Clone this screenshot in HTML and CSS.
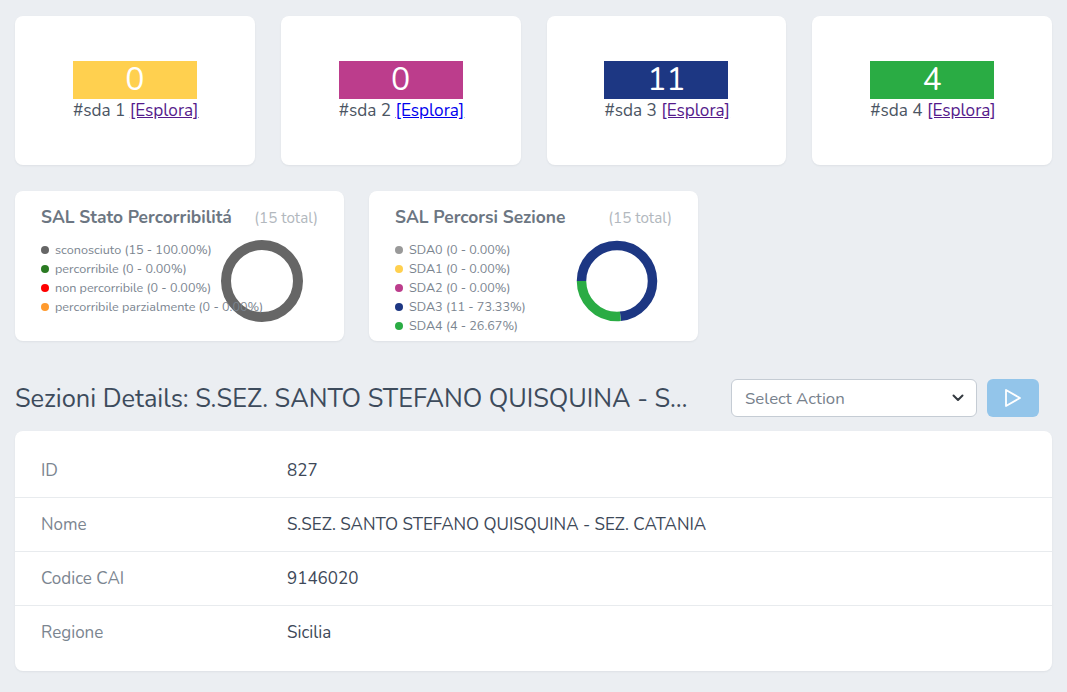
FILE: index.html
```html
<!DOCTYPE html>
<html lang="it">
<head>
<meta charset="utf-8">
<title>Sezioni Details</title>
<link rel="stylesheet" href="styles.css">
</head>
<body>
<main class="page">
  <section class="stats">
    <div class="card stat">
      <div class="stat-box">
        <div class="stat-num yellow">0</div>
        <div class="stat-label">#sda 1 <a class="visited" href="#">[Esplora]</a></div>
      </div>
    </div>
    <div class="card stat">
      <div class="stat-box">
        <div class="stat-num magenta">0</div>
        <div class="stat-label">#sda 2 <a class="link" href="#">[Esplora]</a></div>
      </div>
    </div>
    <div class="card stat">
      <div class="stat-box">
        <div class="stat-num blue">11</div>
        <div class="stat-label">#sda 3 <a class="visited" href="#">[Esplora]</a></div>
      </div>
    </div>
    <div class="card stat">
      <div class="stat-box">
        <div class="stat-num green">4</div>
        <div class="stat-label">#sda 4 <a class="visited" href="#">[Esplora]</a></div>
      </div>
    </div>
  </section>

  <section class="charts">
    <div class="card chart">
      <div class="chart-head">
        <h3 class="chart-title">SAL Stato Percorribilitá</h3>
        <span class="chart-total">(15 total)</span>
      </div>
      <div class="chart-body">
        <ul class="legend">
          <li><span class="dot" style="background:#666666"></span>sconosciuto (15 - 100.00%)</li>
          <li><span class="dot" style="background:#2a7a22"></span>percorribile (0 - 0.00%)</li>
          <li><span class="dot" style="background:#ff0000"></span>non percorribile (0 - 0.00%)</li>
          <li><span class="dot" style="background:#ff9a2e"></span>percorribile parzialmente (0 - 0.00%)</li>
        </ul>
        <svg class="donut donut-a" width="84" height="84" viewBox="0 0 84 84">
          <circle cx="42" cy="42" r="36" fill="none" stroke="#666666" stroke-width="10"/>
        </svg>
      </div>
    </div>
    <div class="card chart">
      <div class="chart-head">
        <h3 class="chart-title">SAL Percorsi Sezione</h3>
        <span class="chart-total">(15 total)</span>
      </div>
      <div class="chart-body">
        <ul class="legend">
          <li><span class="dot" style="background:#999999"></span>SDA0 (0 - 0.00%)</li>
          <li><span class="dot" style="background:#ffd04f"></span>SDA1 (0 - 0.00%)</li>
          <li><span class="dot" style="background:#bc3d8c"></span>SDA2 (0 - 0.00%)</li>
          <li><span class="dot" style="background:#1d3783"></span>SDA3 (11 - 73.33%)</li>
          <li><span class="dot" style="background:#2aac44"></span>SDA4 (4 - 26.67%)</li>
        </ul>
        <svg class="donut donut-b" width="84" height="84" viewBox="0 0 84 84">
          <g transform="rotate(180 42 42)">
            <circle cx="42" cy="42" r="35.5" fill="none" stroke="#1d3783" stroke-width="9.5" stroke-dasharray="163.6 223.1"/>
            <circle cx="42" cy="42" r="35.5" fill="none" stroke="#2aac44" stroke-width="9.5" stroke-dasharray="59.5 223.1" stroke-dashoffset="-163.6"/>
          </g>
        </svg>
      </div>
    </div>
  </section>

  <section class="details-head">
    <h2 class="details-title">Sezioni Details: S.SEZ. SANTO STEFANO QUISQUINA - SEZ. CATANIA</h2>
    <div class="actions">
      <div class="select">
        <span class="select-text">Select Action</span>
        <svg class="chev" width="12" height="8" viewBox="0 0 12 8"><path d="M1.5 1.5 L6 6 L10.5 1.5" fill="none" stroke="#343a40" stroke-width="2" stroke-linecap="round" stroke-linejoin="round"/></svg>
      </div>
      <button class="run" type="button" aria-label="Run">
        <svg width="18" height="20" viewBox="0 0 18 20"><path d="M2 2 L16 10 L2 18 Z" fill="none" stroke="#ffffff" stroke-width="1.8" stroke-linejoin="round"/></svg>
      </button>
    </div>
  </section>

  <section class="card details">
    <div class="row"><div class="label">ID</div><div class="value">827</div></div>
    <div class="row"><div class="label">Nome</div><div class="value">S.SEZ. SANTO STEFANO QUISQUINA - SEZ. CATANIA</div></div>
    <div class="row"><div class="label">Codice CAI</div><div class="value">9146020</div></div>
    <div class="row"><div class="label">Regione</div><div class="value">Sicilia</div></div>
  </section>
</main>
</body>
</html>
```

FILE: styles.css
```css
* { box-sizing: border-box; }
html, body {
  margin: 0;
  padding: 0;
  background: #ebeef2;
  font-family: "Nunito", "Lato", "Noto Sans", sans-serif;
  color: #3d4b5c;
}
.page {
  padding: 16px 15px 20px 15px;
}
.card {
  background: #ffffff;
  border-radius: 8px;
  box-shadow: 0 1px 2px rgba(60, 72, 88, 0.08);
}
.stats {
  display: grid;
  grid-template-columns: repeat(4, 1fr);
  column-gap: 26px;
}
.stat {
  height: 149px;
  display: flex;
  justify-content: center;
  padding-top: 45px;
}
.stat-box {
  width: 124px;
}
.stat-num {
  height: 38px;
  color: #ffffff;
  font-size: 32px;
  line-height: 38px;
  text-align: center;
}
.yellow { background: #ffd04f; }
.magenta { background: #bc3d8c; }
.blue { background: #1d3783; }
.green { background: #2aac44; }
.stat-label {
  font-size: 17.2px;
  line-height: 22px;
  padding-top: 1px;
  color: #4b5563;
  white-space: nowrap;
}
.stat-label a { text-decoration: underline; }
.stat-label a.visited { color: #551a8b; }
.stat-label a.link { color: #0000ee; }

.charts {
  display: grid;
  grid-template-columns: repeat(3, 1fr);
  column-gap: 25px;
  margin-top: 26px;
}
.chart {
  height: 150px;
  padding: 14px 26px 0 26px;
}
.chart-head {
  display: flex;
  justify-content: space-between;
  align-items: baseline;
}
.chart-title {
  margin: 0;
  font-size: 17.4px;
  font-weight: 700;
  color: #6c7682;
}
.chart-total {
  font-size: 15.2px;
  color: #b2b8be;
}
.chart-body {
  position: relative;
  margin-top: 11px;
}
.legend {
  list-style: none;
  margin: 0;
  padding: 0;
  font-size: 12.6px;
  color: #7b8590;
  line-height: 19px;
  position: relative;
  z-index: 1;
}
.legend li {
  display: flex;
  align-items: center;
  white-space: nowrap;
}
.dot {
  width: 8px;
  height: 8px;
  border-radius: 50%;
  margin-right: 6px;
  flex: none;
}
.donut {
  position: absolute;
  top: -1px;
  display: block;
}
.donut-a { left: 179px; }
.donut-b { left: 180px; }

.details-head {
  display: flex;
  align-items: center;
  margin-top: 38px;
  height: 38px;
}
.details-title {
  flex: 1;
  min-width: 0;
  margin: 0;
  font-size: 25.4px;
  font-weight: 400;
  color: #3d4b5c;
  white-space: nowrap;
  overflow: hidden;
  text-overflow: ellipsis;
  padding-right: 34px;
}
.actions {
  display: flex;
  gap: 10px;
  margin-right: 13px;
}
.select {
  width: 246px;
  height: 38px;
  border: 1px solid #c5ccd4;
  border-radius: 6px;
  background: #ffffff;
  display: flex;
  align-items: center;
  padding: 0 12px 0 13px;
  font-size: 16.8px;
  color: #77818c;
}
.select-text { flex: 1; }
.chev { flex: none; }
.run {
  width: 52px;
  height: 38px;
  border: none;
  border-radius: 6px;
  background: #93c5ea;
  display: flex;
  align-items: center;
  justify-content: center;
  padding: 0;
}
.details {
  margin-top: 14px;
  padding: 12px 0;
}
.row {
  display: flex;
  align-items: center;
  height: 54px;
  padding: 0 26px;
  font-size: 17px;
}
.row + .row { border-top: 1px solid #e8ebee; }
.label {
  width: 246px;
  color: #7b8590;
}
.value {
  color: #3d4858;
}
```
